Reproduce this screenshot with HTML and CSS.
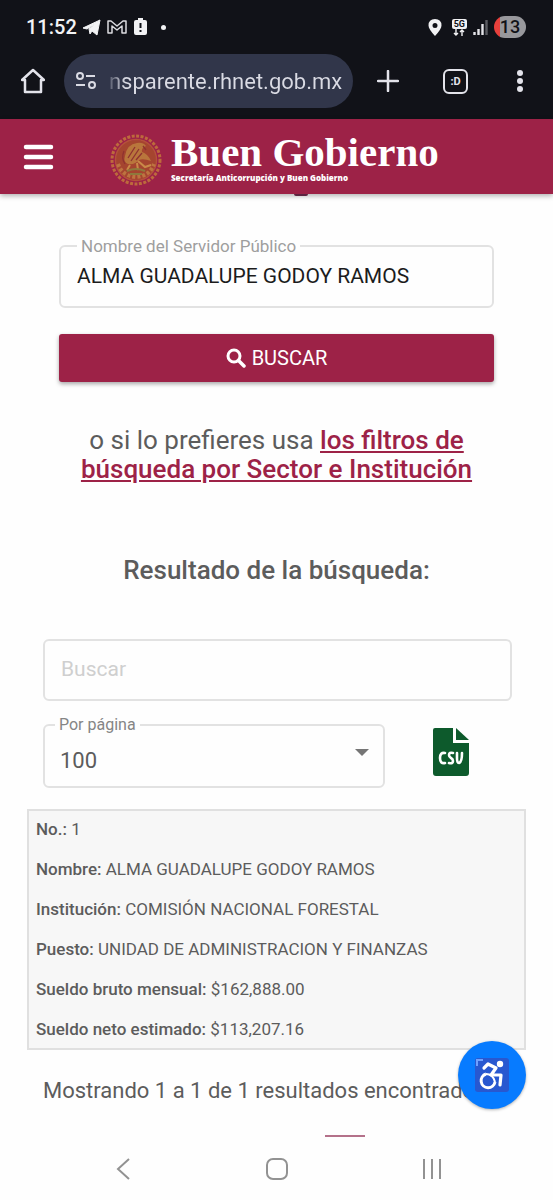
FILE: index.html
```html
<!DOCTYPE html>
<html lang="es">
<head>
    <meta charset="UTF-8">
    <meta name="viewport" content="width=device-width, initial-scale=1.0">
    <title>Buen Gobierno</title>
    <link rel="stylesheet" href="styles.css">
</head>
<body>
<div id="browser">
    <div class="status">
        <div class="status-side">
            <span class="clock">11:52</span>
            <svg width="18" height="18" viewBox="0 0 18 18"><path d="M0 10L17 2L14 17L9 13L7 16L6 11L12 6L4 11Z" fill="#f2f2f4" stroke="#f2f2f4"/></svg>
            <svg width="20" height="16" viewBox="0 0 20 16"><path d="M1 14V2H4L10 7L16 2H19V14H15V7L10 11L5 7V14Z" fill="none" stroke="#dcdce0" stroke-width="1.5" stroke-linejoin="round"/></svg>
            <svg class="low-battery" width="13" height="18" viewBox="0 0 13 18"><path d="M4 0H9V2H11Q13 2 13 4V15Q13 17 11 17H2Q0 17 0 15V4Q0 2 2 2H4Z" fill="#f2f2f4"/><path d="M6.5 5V10M6.5 12V14" stroke="#111218" stroke-width="2"/></svg>
            <i class="dot"></i>
        </div>
        <div class="status-side">
            <svg width="14" height="17" viewBox="0 0 14 17"><path fill-rule="evenodd" d="M7 0Q13.500 0 13.500 6.500Q13.500 10 7 17Q.5 10 .5 6.500Q.5 0 7 0ZM7 4A2.500 2.500 0 1 0 7 9A2.500 2.500 0 1 0 7 4Z" fill="#f2f2f4"/></svg>
            <span class="net">
                <b>5G</b>
                <svg width="12" height="7" viewBox="0 0 12 7"><path d="M3 0V6M1 4L3 6L5 4M9 7V1M7 3L9 1L11 3" fill="none" stroke="#f2f2f4" stroke-width="1.4"/></svg>
            </span>
            <svg width="15" height="16" viewBox="0 0 15 16"><path d="M1.500 13V16M5.500 10V16M9.500 5V16" stroke="#e4e4e8" stroke-width="2.400"/><path d="M13.500 1V16" stroke="#5b5c62" stroke-width="2.400"/></svg>
            <span class="battery">13</span>
        </div>
    </div>
    <div class="toolbar">
        <button class="tool" type="button" aria-label="Inicio">
            <svg width="24" height="26" viewBox="0 0 24 26"><path d="M4 12H1L12 2L23 12H20V24H4Z" fill="none" stroke="#e3e3ea" stroke-width="2.500" stroke-linejoin="round" stroke-linecap="round"/></svg>
        </button>
        <div class="address">
            <svg width="22" height="18" viewBox="0 0 22 18"><g fill="none" stroke="#dadbe4" stroke-width="2"><circle cx="5" cy="4" r="3"/><path d="M11 4H20M1 13H10"/><circle cx="17" cy="13" r="3"/></g></svg>
            <span class="url">nsparente.rhnet.gob.mx</span>
        </div>
        <button class="tool" type="button" aria-label="Nueva pestaña">
            <svg width="22" height="22" viewBox="0 0 22 22"><path d="M11 1V21M1 11H21" stroke="#e3e3ea" stroke-width="2.500" stroke-linecap="round"/></svg>
        </button>
        <button class="tool tabs" type="button" aria-label="Pestañas">:D</button>
        <button class="tool" type="button" aria-label="Más opciones">
            <svg width="6" height="24" viewBox="0 0 6 24"><g fill="#e3e3ea"><circle cx="3" cy="4" r="3"/><circle cx="3" cy="12" r="3"/><circle cx="3" cy="20" r="3"/></g></svg>
        </button>
    </div>
</div>

<header id="header">
    <button class="menu" type="button" aria-label="Menú">
        <svg width="32" height="28" viewBox="0 0 32 28"><path d="M4 4H29M4 14H29M4 24H29" stroke="#fff" stroke-width="4.500" stroke-linecap="round"/></svg>
    </button>
    <a class="brand" href="#">
        <svg class="seal" width="52" height="52" viewBox="0 0 52 52">
            <circle cx="26" cy="26" r="20" fill="#a5452f"/>
            <circle cx="26" cy="26" r="24" fill="none" stroke="#bd6a3c" stroke-width="3" stroke-dasharray="3 1.500"/>
            <circle cx="26" cy="26" r="20.500" fill="none" stroke="#b4523a" stroke-width="1.500"/>
            <path d="M15 22Q17 10 27 9Q33 8 36 12Q31 14 32 18Q38 20 41 27Q33 24 29 26Q25 31 18 30Q13 28 15 22Z" fill="#b9763c"/>
            <path d="M18 24L25 13M21 27L29 15M26 26L32 19M14 17Q11 24 15 30M33 12L36 16" fill="none" stroke="#8f3230" stroke-width="1.300"/>
            <path d="M28 27L35 33L41 31M27 29L28 36M20 31L17 36" fill="none" stroke="#c98a48" stroke-width="2"/>
            <path d="M8 30Q12 42 26 43Q40 42 44 30" fill="none" stroke="#bd7440" stroke-width="4" stroke-dasharray="3 2"/>
            <path d="M17 37Q26 33 35 37M20 40H32" fill="none" stroke="#8d7a3c" stroke-width="2"/>
        </svg>
        <span class="brand-text">
            <strong>Buen Gobierno</strong>
            <small>Secretaría Anticorrupción y Buen Gobierno</small>
        </span>
    </a>
</header>

<main id="main">
    <div class="title-edge"></div>
    <form class="search">
        <fieldset class="field">
            <legend><label for="nombre">Nombre del Servidor Público</label></legend>
            <input id="nombre" type="text" value="ALMA GUADALUPE GODOY RAMOS">
        </fieldset>
        <button class="btn" type="button">
            <svg width="20" height="20" viewBox="0 0 20 20"><circle cx="8" cy="8" r="6" fill="none" stroke="#fff" stroke-width="3"/><path d="M12.500 12.500L18 18" stroke="#fff" stroke-width="3.500" stroke-linecap="round"/></svg>
            BUSCAR
        </button>
    </form>
    <p class="filters">o si lo prefieres usa <a href="#">los filtros de búsqueda por Sector e Institución</a></p>
    <h2>Resultado de la búsqueda:</h2>

    <div class="controls">
        <input class="filter" type="text" placeholder="Buscar" aria-label="Buscar">
        <div class="row">
            <fieldset class="field pages">
                <legend><label for="por-pagina">Por página</label></legend>
                <select id="por-pagina">
                    <option>100</option>
                </select>
                <svg width="14" height="8" viewBox="0 0 14 8"><path d="M0 0H14L7 7Z" fill="#757575"/></svg>
            </fieldset>
            <a class="csv" href="#" aria-label="Descargar CSV">
                <svg width="38" height="50" viewBox="0 0 38 50">
                    <path d="M3 1H21V16H37V46Q37 49 34 49H4Q1 49 1 46V3Q1 1 3 1Z" fill="#0d5a2c"/>
                    <path d="M24 1L37 13H24Z" fill="#0d5a2c"/>
                    <g fill="none" stroke="#fff" stroke-width="2.600" stroke-linecap="round" stroke-linejoin="round"><path d="M13 26Q8 25 8 31Q8 37 13 36"/><path d="M21 26Q17 25 17 28Q17 30 19 31Q21 32 21 34Q21 37 17 36"/><path d="M25 26V31Q25 36 27 36Q30 35 30 26"/></g>
                </svg>
            </a>
        </div>
    </div>

    <dl class="card">
        <div><dt>No.:</dt> <dd>1</dd></div>
        <div><dt>Nombre:</dt> <dd>ALMA GUADALUPE GODOY RAMOS</dd></div>
        <div><dt>Institución:</dt> <dd>COMISIÓN NACIONAL FORESTAL</dd></div>
        <div><dt>Puesto:</dt> <dd>UNIDAD DE ADMINISTRACION Y FINANZAS</dd></div>
        <div><dt>Sueldo bruto mensual:</dt> <dd>$162,888.00</dd></div>
        <div><dt>Sueldo neto estimado:</dt> <dd>$113,207.16</dd></div>
    </dl>
    <p class="total">Mostrando 1 a 1 de 1 resultados encontrados</p>
    <div class="pager"></div>
</main>

<button id="access" type="button" aria-label="Accesibilidad">
    <svg width="36" height="36" viewBox="0 0 36 36">
        <rect x="1" y="1" width="34" height="34" rx="3" fill="#2858d0"/>
        <path d="M3 9V3H9" fill="none" stroke="#6fa0ff" stroke-width="2"/>
        <circle cx="26" cy="7" r="3.200" fill="#fff"/>
        <path d="M10 11L14 7L22 11L17 18H27L26 28" fill="none" stroke="#fff" stroke-width="3.200" stroke-linejoin="round" stroke-linecap="round"/>
        <path d="M12 17A7 7 0 1 0 21 25" fill="none" stroke="#fff" stroke-width="3"/>
        <path d="M12 17Q19 17 21 25" fill="none" stroke="#fff" stroke-width="2"/>
    </svg>
</button>

<nav id="navbar">
    <button type="button" aria-label="Atrás"><svg width="16" height="24" viewBox="0 0 16 24"><path d="M14 2L3 12L14 22" fill="none" stroke="#929292" stroke-width="2"/></svg></button>
    <button type="button" aria-label="Inicio"><svg width="24" height="24" viewBox="0 0 24 24"><rect x="2" y="2" width="20" height="20" rx="6" fill="none" stroke="#929292" stroke-width="2"/></svg></button>
    <button type="button" aria-label="Recientes"><svg width="22" height="24" viewBox="0 0 22 24"><path d="M3 2V22M11 2V22M19 2V22" stroke="#929292" stroke-width="2"/></svg></button>
</nav>
</body>
</html>
```
FILE: styles.css
```css
*{
    margin: 0;
    padding: 0;
    box-sizing: border-box;
}
body{
    min-height: 100vh;
    display: flex;
    flex-direction: column;
    background: #fefefe;
    color: #5c5c5c;
    font-family: Roboto, "Liberation Sans", sans-serif;
}
button,input,select{
    font: inherit;
    border: none;
    background: none;
}
svg{
    display: block;
    flex: none;
}
/* barra del navegador */
#browser{
    height: 119px;
    background: #111218;
    color: #f2f2f4;
}
.status{
    height: 54px;
    padding: 0 27px 0 26px;
    display: flex;
    justify-content: space-between;
    align-items: center;
}
.status-side{
    display: flex;
    align-items: center;
    gap: 6px;
}
.clock{
    font-size: 20px;
    font-weight: 500;
}
.low-battery{
    margin-left: 1px;
}
.dot{
    width: 5px;
    height: 5px;
    margin-left: 8px;
    border-radius: 50%;
    background: #f2f2f4;
}
.net{
    margin-left: 4px;
    display: flex;
    flex-direction: column;
    align-items: center;
}
.net b{
    padding: 0 2px;
    border-radius: 2px;
    background: #f2f2f4;
    color: #111218;
    font-size: 9px;
    line-height: 10px;
}
.battery{
    width: 32px;
    border-radius: 11px;
    background: linear-gradient(90deg, #e8403c 6px, #98989c 6px);
    color: #111218;
    font-size: 18px;
    font-weight: 500;
    line-height: 22px;
    text-align: center;
}
.toolbar{
    height: 54px;
    padding: 0 18px;
    display: flex;
    align-items: center;
}
.tool{
    width: 30px;
    display: flex;
    justify-content: center;
}
.address{
    flex: 1;
    height: 54px;
    margin: 0 20px 0 16px;
    padding: 0 11px;
    display: flex;
    align-items: center;
    gap: 12px;
    border-radius: 27px;
    background: #31364a;
    white-space: nowrap;
}
.url{
    font-size: 22px;
    background: linear-gradient(90deg, #555a6c, #dadbe4 16px);
    background-clip: text;
    color: transparent;
}
.tabs{
    width: 25px;
    height: 25px;
    margin: 0 37px 0 40px;
    align-items: center;
    border: 2px solid #e3e3ea;
    border-radius: 6px;
    color: #e3e3ea;
    font-size: 11px;
    font-weight: 700;
}
/* cabecera */
#header{
    height: 75px;
    padding: 0 22px;
    display: flex;
    align-items: center;
    background: #9d2247;
    box-shadow: 0 2px 5px rgba(0,0,0,0.3);
}
.menu{
    cursor: pointer;
}
.brand{
    margin-left: 56px;
    display: flex;
    align-items: center;
    gap: 9px;
    color: #fff;
    text-decoration: none;
}
.seal{
    margin-top: 6px;
}
.brand-text strong{
    display: block;
    font-family: "Liberation Serif", serif;
    font-size: 41px;
    line-height: 42px;
}
.brand-text small{
    display: block;
    font-family: "Open Sans", sans-serif;
    font-size: 8px;
    font-weight: 800;
    line-height: 10px;
}
/* contenido */
#main{
    flex: 1;
    padding: 0 27px;
}
/* borde del título que queda bajo la cabecera */
.title-edge{
    width: 14px;
    height: 2px;
    margin: 0 auto;
    border-radius: 0 0 7px 7px;
    transform: translateX(24px);
    background: #5c2440;
}
.search{
    padding: 40px 32px 0;
}
.field{
    padding: 0 16px;
    border: 2px solid #e2e2e2;
    border-radius: 6px;
}
.field legend{
    padding: 0 4px;
    color: #9e9e9e;
    font-size: 17px;
    line-height: 20px;
}
.field input{
    width: 100%;
    height: 40px;
    margin-bottom: 10px;
    color: #1c1c1c;
    font-size: 21px;
}
.btn{
    width: 100%;
    height: 48px;
    margin-top: 26px;
    display: flex;
    justify-content: center;
    align-items: center;
    gap: 6px;
    border-radius: 3px;
    background: #9d2247;
    box-shadow: 0 2px 4px rgba(0,0,0,0.35);
    color: #fff;
    font-size: 20px;
    cursor: pointer;
}
.filters{
    margin-top: 44px;
    padding: 0 40px;
    font-size: 26px;
    line-height: 29px;
    text-align: center;
}
.filters a{
    color: #9d2247;
    font-weight: 500;
}
h2{
    margin-top: 70px;
    font-size: 26px;
    font-weight: 500;
    line-height: 32px;
    text-align: center;
}
.controls{
    margin-top: 53px;
    padding: 0 14px 0 16px;
}
.filter{
    width: 100%;
    height: 62px;
    padding: 0 16px 3px;
    border: 2px solid #e2e2e2;
    border-radius: 6px;
    font-size: 21px;
}
.filter::placeholder{
    color: #cfcfcf;
}
.row{
    margin-top: 14px;
    display: flex;
    align-items: center;
}
.pages{
    flex: 0 0 73%;
    position: relative;
    padding: 0 10px;
}
.pages legend{
    padding: 0 4px;
    color: #858585;
    font-size: 16px;
}
.pages select{
    width: 100%;
    height: 51px;
    padding-left: 5px;
    appearance: none;
    color: #5c5c5c;
    font-size: 22px;
}
/* flecha encima del select */
.pages svg{
    position: absolute;
    right: 14px;
    top: 14px;
    pointer-events: none;
}
.csv{
    margin-left: 47px;
}
.card{
    margin-top: 21px;
    padding: 8px 7px 9px;
    display: flex;
    flex-direction: column;
    gap: 20px;
    border: 2px solid #e0e0e0;
    background: #f7f7f7;
    font-size: 17px;
    line-height: 20px;
}
.card dt,.card dd{
    display: inline;
}
.card dt{
    font-weight: 500;
}
.total{
    margin-top: 27px;
    padding-left: 16px;
    font-size: 22px;
    line-height: 28px;
    white-space: nowrap;
}
.pager{
    width: 40px;
    height: 2px;
    margin: 30px 0 0 298px;
    background: #b4718a;
}
#access{
    position: fixed;
    right: 27px;
    bottom: 91px;
    width: 68px;
    height: 68px;
    display: flex;
    justify-content: center;
    align-items: center;
    border-radius: 50%;
    background: #077bff;
    box-shadow: 0 1px 3px rgba(0,0,0,0.3);
}
/* botones del sistema */
#navbar{
    height: 64px;
    padding: 0 44px 0 46px;
    display: flex;
    align-items: center;
}
#navbar button{
    flex: 1;
    display: flex;
    justify-content: center;
}
```
